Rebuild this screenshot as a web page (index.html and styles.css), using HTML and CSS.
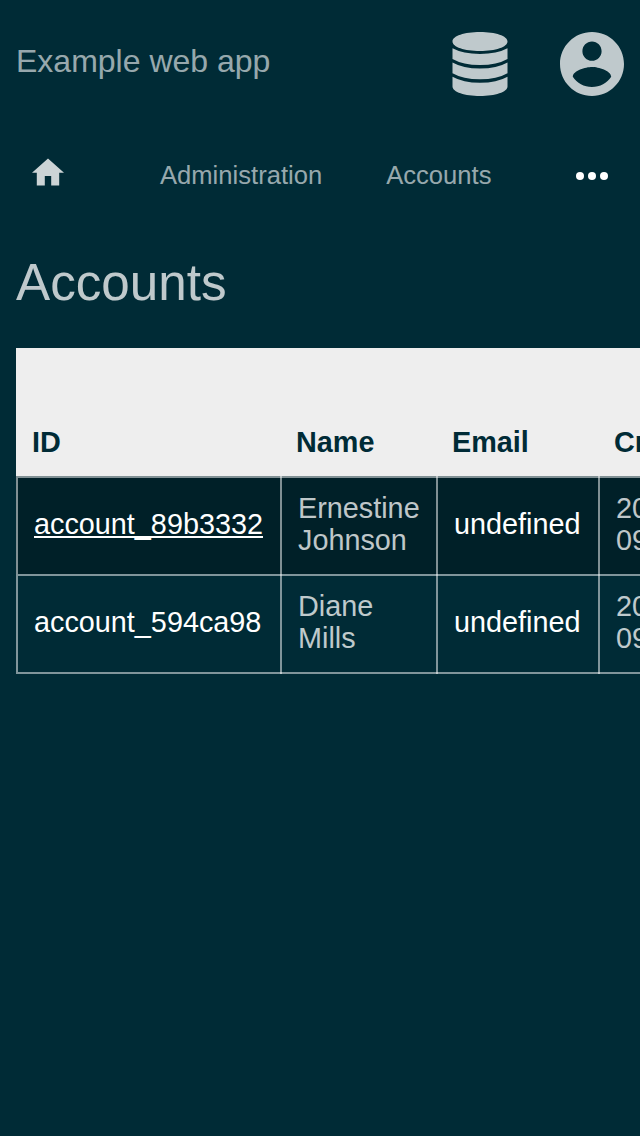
FILE: index.html
```html
<!DOCTYPE html>
<html lang="en">
<head>
<meta charset="utf-8">
<title>Accounts</title>
<link rel="stylesheet" href="styles.css">
</head>
<body>
<header class="app-header">
  <div class="app-title">Example web app</div>
  <div class="app-actions">
    <svg class="icon-db" viewBox="0 0 56 64"><path d="M28 0C43.500 0 55.500 4 55.500 9.500S43.500 19 28 19 .5 15 .5 9.500 12.500 0 28 0ZM.5 16.300Q11 22 28 22T55.500 16.300V27Q45 33 28 33T.5 27ZM.5 30.500Q11 36.500 28 36.500T55.500 30.500V41.200Q45 47.200 28 47.200T.5 41.200ZM.5 44.800Q11 50.800 28 50.800T55.500 44.800V54.500C55.500 60 43 64 28 64S.5 60 .5 54.500Z"/></svg>
    <svg class="icon-user" viewBox="2 2 20 20"><path d="M12 2C6.480 2 2 6.480 2 12s4.480 10 10 10 10-4.480 10-10S17.520 2 12 2zm0 3c1.660 0 3 1.340 3 3s-1.340 3-3 3-3-1.340-3-3 1.340-3 3-3zm0 14.200c-2.500 0-4.710-1.280-6-3.220.03-1.990 4-3.080 6-3.080 1.990 0 5.970 1.090 6 3.080-1.290 1.940-3.500 3.220-6 3.220z"/></svg>
  </div>
</header>
<nav class="breadcrumbs">
  <a class="crumb-home"><svg class="icon-home" viewBox="2 2.750 20 17.500"><path d="M10 20v-6h4v6h5v-8h3L12 3 2 12h3v8z"/></svg></a>
  <a class="crumb">Administration</a>
  <a class="crumb">Accounts</a>
  <a class="crumb-more"><svg class="icon-more" viewBox="0 0 32 8"><circle cx="4" cy="4" r="4"/><circle cx="16" cy="4" r="4"/><circle cx="28" cy="4" r="4"/></svg></a>
</nav>
<main class="content">
  <h1 class="heading">Accounts</h1>
  <table class="accounts">
    <colgroup><col class="col-id"><col class="col-name"><col class="col-email"><col class="col-created"></colgroup>
    <thead><tr><th>ID</th><th>Name</th><th>Email</th><th>Created</th></tr></thead>
    <tbody>
      <tr class="active"><td><a class="link current">account_89b3332</a></td><td>Ernestine Johnson</td><td><a class="link">undefined</a></td><td>20<br>09</td></tr>
      <tr><td><a class="link">account_594ca98</a></td><td>Diane<br>Mills</td><td><a class="link">undefined</a></td><td>20<br>09</td></tr>
    </tbody>
  </table>
</main>
</body>
</html>
```
FILE: styles.css
```css
* { box-sizing: border-box; }
body {
  margin: 0;
  height: 1136px;
  overflow: hidden;
  background: #002b36;
  color: rgba(255, 255, 255, .75);
  font-family: "Liberation Sans", Arial, sans-serif;
  font-size: 28.8px;
  line-height: 32px;
}
svg { display: block; fill: currentColor; }
.app-header {
  display: flex;
  justify-content: space-between;
  height: 128px;
  padding: 32px 16px;
}
.app-title { padding-top: 13px; font-size: 32px; color: rgba(255, 255, 255, .6); }
.app-actions { display: flex; gap: 52px; }
.icon-db { width: 56px; height: 64px; }
.icon-user { width: 64px; height: 64px; }
.breadcrumbs {
  display: flex;
  height: 96px;
  padding: 0 32px;
  font-size: 25.6px;
}
.crumb-home { width: 128px; padding-top: 30px; color: rgba(255, 255, 255, .8); }
.icon-home { width: 32px; height: 28px; }
.crumb { margin-right: 64px; padding-top: 31px; color: rgba(255, 255, 255, .6); }
.crumb-more { margin-left: auto; padding-top: 44px; color: #fff; }
.icon-more { width: 32px; height: 8px; }
.content { padding-left: 16px; overflow: hidden; }
.heading {
  margin: 0;
  height: 124px;
  padding-top: 27px;
  font-size: 51.2px;
  font-weight: 400;
  line-height: 64px;
}
.accounts {
  width: 780px;
  table-layout: fixed;
  border-spacing: 0;
}
.col-id { width: 264px; }
.col-name { width: 156px; }
.col-email { width: 162px; }
th {
  height: 128px;
  padding: 0 16px 18px;
  background: #eee;
  color: #002b36;
  text-align: left;
  vertical-align: bottom;
}
td {
  --rule: linear-gradient(rgba(255, 255, 255, .5), rgba(255, 255, 255, .5));
  height: 98px;
  padding: 16px 14px 18px 18px;
  background: var(--rule) 0 0 / 2px 100% no-repeat, var(--rule) 0 0 / 100% 2px no-repeat;
}
td:first-child {
  background: var(--rule) 0 0 / 2px 100% no-repeat, var(--rule) 2px 0 / 100% 2px no-repeat;
}
tr:last-child td {
  height: 100px;
  padding-bottom: 20px;
  background: var(--rule) 0 0 / 2px 100% no-repeat, var(--rule) 0 0 / 100% 2px no-repeat, var(--rule) 0 100% / 100% 2px no-repeat;
}
tr:last-child td:first-child {
  background: var(--rule) 0 0 / 2px 100% no-repeat, var(--rule) 2px 0 / 100% 2px no-repeat, var(--rule) 2px 100% / 100% 2px no-repeat;
}
.active { background: #002028; }
.link { color: #fff; }
.current {
  text-decoration: underline;
  text-decoration-thickness: 2px;
  text-decoration-skip-ink: none;
  text-underline-offset: 2px;
}
```
